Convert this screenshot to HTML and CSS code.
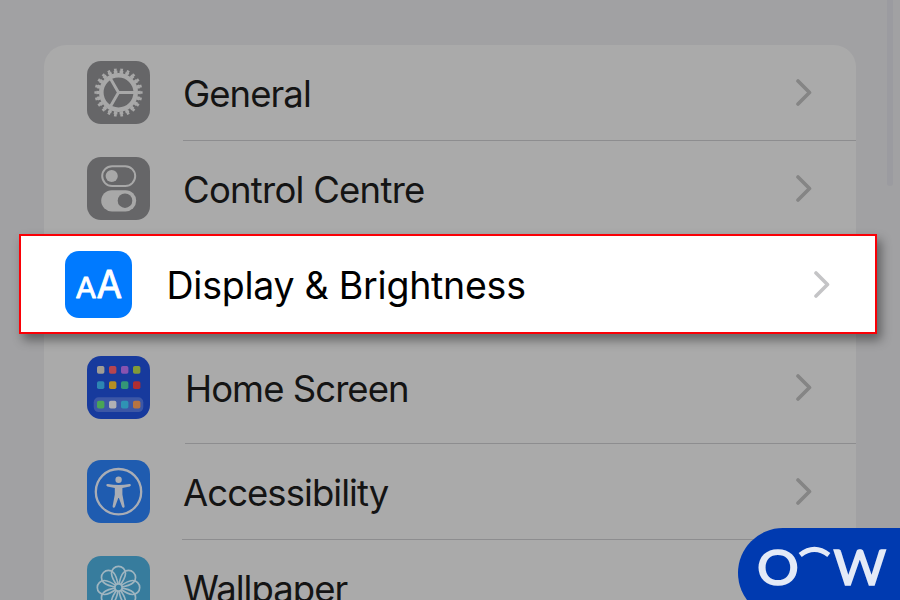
FILE: index.html
```html
<!DOCTYPE html>
<html lang="en">
<head>
<meta charset="utf-8">
<title>Settings</title>
<link rel="stylesheet" href="styles.css">
</head>
<body>
<main class="screen">
  <ul class="card">
    <li class="row">
      <svg class="icon icon-grey" viewBox="0 0 63 63">
        <g fill="none" stroke="#a8a8a8">
          <circle cx="31.5" cy="31.5" r="17.2" stroke-width="4.6"/>
          <circle cx="31.5" cy="31.5" r="20.6" stroke-width="3" pathLength="22" stroke-dasharray=".62 .38" stroke-dashoffset=".31"/>
          <circle cx="31.5" cy="31.5" r="22.9" stroke-width="2.4" pathLength="22" stroke-dasharray=".42 .58" stroke-dashoffset=".21"/>
          <path d="M31.5 31.5H47M31.5 31.5L23.7 18M31.5 31.5L23.7 45" stroke-width="2.9"/>
        </g>
      </svg>
      <span class="label general">General</span>
      <svg class="chevron" viewBox="0 0 16 27"><path d="M2 2L13.5 13.5L2 25"/></svg>
    </li>
    <li class="row">
      <svg class="icon icon-grey" viewBox="0 0 63 63">
        <rect x="15.2" y="9.2" width="33" height="19.8" rx="9.9" fill="none" stroke="#a8a8a8" stroke-width="2"/>
        <circle cx="24.7" cy="19" r="6.1" fill="#a8a8a8"/>
        <rect x="14.2" y="33.2" width="35" height="21.2" rx="10.6" fill="#a8a8a8"/>
        <circle cx="38" cy="43.7" r="7.3" fill="#666668"/>
      </svg>
      <span class="label control">Control Centre</span>
      <svg class="chevron" viewBox="0 0 16 27"><path d="M2 2L13.5 13.5L2 25"/></svg>
    </li>
    <li class="row featured">
      <svg class="icon icon-display" viewBox="0 0 67 67">
        <g class="letters">
          <text x="10.6" y="47" font-size="29" textLength="21" lengthAdjust="spacingAndGlyphs">A</text>
          <text x="31.6" y="47" font-size="37.5" textLength="25.6" lengthAdjust="spacingAndGlyphs">A</text>
        </g>
      </svg>
      <span class="label display">Display &amp; Brightness</span>
      <svg class="chevron" viewBox="0 0 16 27"><path d="M2 2L13.5 13.5L2 25"/></svg>
    </li>
    <li class="row home-row">
      <svg class="icon icon-home" viewBox="0 0 63 63">
        <rect x="6.7" y="41.3" width="49.6" height="14.8" rx="5" fill="#3c57a6"/>
        <g>
          <rect x="10" y="10" width="7.4" height="7.8" rx="1.8" fill="#a09c94"/>
          <rect x="22" y="10" width="7.4" height="7.8" rx="1.8" fill="#b54550"/>
          <rect x="34" y="10" width="7.4" height="7.8" rx="1.8" fill="#8753b0"/>
          <rect x="46" y="10" width="7.4" height="7.8" rx="1.8" fill="#829a38"/>
          <rect x="10" y="25.2" width="7.4" height="7.8" rx="1.8" fill="#2d86b2"/>
          <rect x="22" y="25.2" width="7.4" height="7.8" rx="1.8" fill="#b58e24"/>
          <rect x="34" y="25.2" width="7.4" height="7.8" rx="1.8" fill="#349677"/>
          <rect x="46" y="25.2" width="7.4" height="7.8" rx="1.8" fill="#b02e32"/>
          <rect x="10" y="44.8" width="7.4" height="7.8" rx="1.8" fill="#4aa555"/>
          <rect x="22" y="44.8" width="7.4" height="7.8" rx="1.8" fill="#b0b0b4"/>
          <rect x="34" y="44.8" width="7.4" height="7.8" rx="1.8" fill="#2f93b4"/>
          <rect x="46" y="44.8" width="7.4" height="7.8" rx="1.8" fill="#b87440"/>
        </g>
      </svg>
      <span class="label home">Home Screen</span>
      <svg class="chevron" viewBox="0 0 16 27"><path d="M2 2L13.5 13.5L2 25"/></svg>
    </li>
    <li class="row access-row">
      <svg class="icon icon-access" viewBox="0 0 63 63">
        <circle cx="31.5" cy="31.7" r="22.7" fill="none" stroke="#a9adb5" stroke-width="2.3"/>
        <g fill="#a9adb5">
          <circle cx="31.6" cy="19.8" r="3.2"/>
          <path d="M20.8 24.1Q31.6 26 42.4 24.1Q43.7 24 43.9 25Q44 26 42.8 26.4L35.4 28V34.5L37.6 46.2Q37.7 47.5 36.7 47.7Q35.6 47.9 35.1 46.7L31.9 38H31.3L28.1 46.7Q27.6 47.9 26.5 47.7Q25.5 47.5 25.6 46.2L27.8 34.5V28L20.4 26.4Q19.2 26 19.3 25Q19.5 24 20.8 24.1Z"/>
        </g>
      </svg>
      <span class="label access">Accessibility</span>
      <svg class="chevron" viewBox="0 0 16 27"><path d="M2 2L13.5 13.5L2 25"/></svg>
    </li>
    <li class="row">
      <svg class="icon icon-wall" viewBox="0 0 63 63">
        <defs><path id="petal" d="M0 0C-3 -4 -7 -9 -7 -14.2A7 7 0 0 1 7 -14.2C7 -9 3 -4 0 0"/></defs>
        <g transform="translate(31.5 31.5)" fill="none" stroke="#9fb5c0" stroke-width="1.7">
          <use href="#petal"/>
          <use href="#petal" transform="rotate(45)"/>
          <use href="#petal" transform="rotate(90)"/>
          <use href="#petal" transform="rotate(135)"/>
          <use href="#petal" transform="rotate(180)"/>
          <use href="#petal" transform="rotate(225)"/>
          <use href="#petal" transform="rotate(270)"/>
          <use href="#petal" transform="rotate(315)"/>
          <circle r="3.6" fill="#377c9d"/>
        </g>
      </svg>
      <span class="label wall">Wallpaper</span>
    </li>
  </ul>
  <div class="scrollbar"></div>
  <div class="badge">
    <svg class="logo" viewBox="0 0 162 72">
      <text x="19" y="56.5" textLength="41.8" lengthAdjust="spacingAndGlyphs">O</text>
      <path d="M62.2 27Q76.4 15.8 90.8 27" fill="none" stroke="#e4eaf7" stroke-width="5"/>
      <text x="95.6" y="56.5" textLength="52.6" lengthAdjust="spacingAndGlyphs">W</text>
    </svg>
  </div>
</main>
</body>
</html>
```

FILE: styles.css
```css
* {
  box-sizing: border-box;
}

body {
  margin: 0;
  font-family: Inter, "Liberation Sans", sans-serif;
}

.screen {
  position: relative;
  width: 900px;
  height: 600px;
  overflow: hidden;
  padding: 45px 44px 0;
  background: #a1a1a3;
}

.card {
  height: 640px;
  margin: 0;
  padding: 0;
  list-style: none;
  border-radius: 22px 22px 0 0;
  background: #aaaaaa;
}

.row {
  display: flex;
  align-items: center;
  height: 96px;
  padding: 0 44px 1px 43px;
  background: linear-gradient(#8d8d8f, #8d8d8f) right bottom / 673px 1px no-repeat;
}

.row:nth-child(2),
.row:last-child {
  background: none;
}

.icon {
  flex: none;
  width: 63px;
  height: 63px;
  border-radius: 14px;
}

.icon-grey {
  background: #666668;
}

.icon-home {
  background: #173a9d;
}

.icon-access {
  background: #1f5cb0;
}

.icon-wall {
  background: #377c9d;
}

.label {
  flex: 1;
  margin-left: 33px;
  padding-top: 3px;
  font-size: 36.5px;
  line-height: 44px;
  letter-spacing: -0.95px;
  white-space: nowrap;
  color: #141414;
}

.control {
  letter-spacing: -0.75px;
}

.home {
  margin-left: 35px;
}

.chevron {
  flex: none;
  width: 16px;
  height: 27px;
}

.chevron path {
  fill: none;
  stroke: #858585;
  stroke-width: 3.6;
  stroke-linecap: round;
  stroke-linejoin: round;
}

.featured {
  position: relative;
  z-index: 1;
  height: 100px;
  margin: -3px -21px -2px -25px;
  padding: 0 45px 0 44px;
  border: 2px solid #fa0006;
  background: #fff;
  box-shadow: 4px 6px 10px rgba(0, 0, 0, 0.42);
}

.icon-display {
  width: 67px;
  height: 67px;
  background: #007aff;
}

.letters {
  fill: #fff;
  stroke: #fff;
  stroke-width: 0.8;
  stroke-linejoin: round;
}

.featured .label {
  margin-left: 34.5px;
  padding-top: 4px;
  font-size: 37.5px;
  letter-spacing: -0.25px;
  color: #000;
}

.featured .chevron path {
  stroke: #c4c4c6;
}

.home-row {
  height: 112px;
  background-size: 671px 1px;
}

.access-row {
  background-size: 674px 1px;
}

.scrollbar {
  position: absolute;
  top: -10px;
  left: 887px;
  width: 6px;
  height: 196px;
  border-radius: 3px;
  background: #9b9ba0;
}

.badge {
  position: absolute;
  z-index: 2;
  top: 528px;
  right: 0;
  width: 162px;
  height: 90px;
  border-radius: 45px 0 0 45px;
  background: #003ab0;
}

.logo {
  display: block;
  width: 162px;
  height: 72px;
  font-family: Lato, sans-serif;
  font-size: 49px;
  fill: #e4eaf7;
}

.logo text {
  stroke: #e4eaf7;
  stroke-width: 1.7;
}
```
